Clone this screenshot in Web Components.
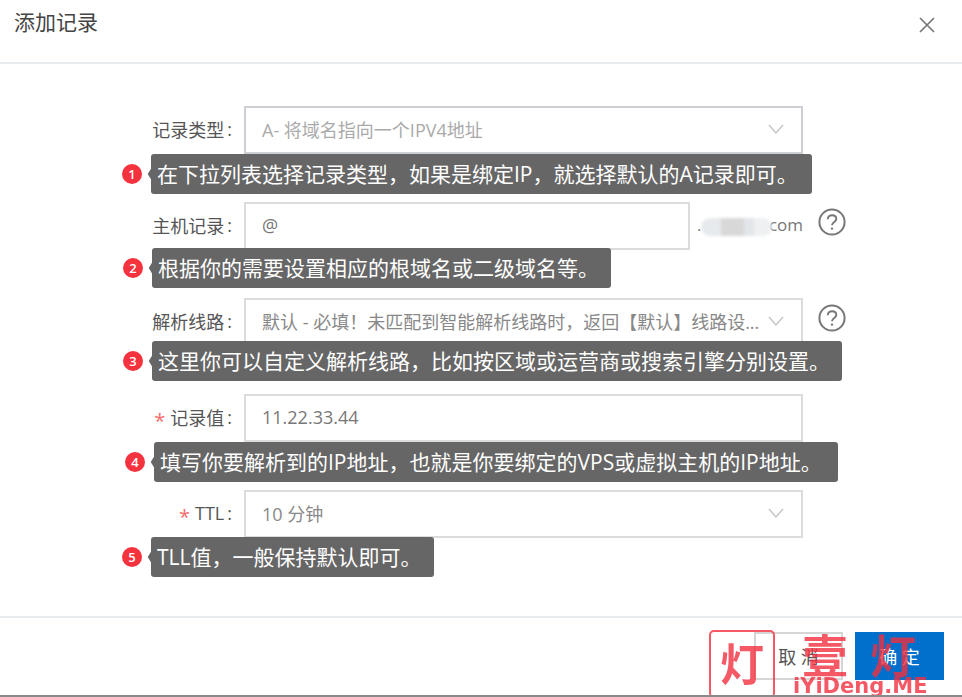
<!DOCTYPE html>
<html lang="zh">
<head>
<meta charset="utf-8">
<title>添加记录</title>
<style>
    html, body { margin: 0; background: #fff; }
    body {
        font-family: 'Open Sans', 'Noto Sans CJK SC', sans-serif;
        overflow: hidden;
    }
</style>
</head>
<body>
<record-dialog heading="添加记录">
    <form-row label="记录类型">
        <select-box dim value="A- 将域名指向一个IPV4地址"></select-box>
    </form-row>
    <form-row label="主机记录" help>
        <text-box value="@" width="446"></text-box>
        <domain-suffix></domain-suffix>
    </form-row>
    <form-row label="解析线路" help>
        <select-box value="默认 - 必填！未匹配到智能解析线路时，返回【默认】线路设..."></select-box>
    </form-row>
    <form-row label="记录值" required>
        <text-box value="11.22.33.44"></text-box>
    </form-row>
    <form-row label="TTL" required>
        <select-box value="10 分钟"></select-box>
    </form-row>

    <note-tip slot="notes" num="1" left="122" top="154" width="661">在下拉列表选择记录类型，如果是绑定IP，就选择默认的A记录即可。</note-tip>
    <note-tip slot="notes" num="2" left="123" top="248" width="459">根据你的需要设置相应的根域名或二级域名等。</note-tip>
    <note-tip slot="notes" num="3" left="123" top="341" width="690">这里你可以自定义解析线路，比如按区域或运营商或搜索引擎分别设置。</note-tip>
    <note-tip slot="notes" num="4" left="125" top="442" width="684">填写你要解析到的IP地址，也就是你要绑定的VPS或虚拟主机的IP地址。</note-tip>
    <note-tip slot="notes" num="5" left="122" top="537" width="283">TLL值，一般保持默认即可。</note-tip>
    <site-mark slot="notes"></site-mark>
</record-dialog>

<script>
const fontStack = `'Open Sans', 'Noto Sans CJK SC', sans-serif`;

class RecordDialog extends HTMLElement {
    constructor() {
        super();
        this.attachShadow({ mode: 'open' });
        this.shadowRoot.innerHTML = `
            <style>
                :host {
                    display: flex;
                    flex-direction: column;
                    position: relative;
                    width: 962px;
                    height: 697px;
                    box-sizing: border-box;
                    border-bottom: 2px solid #8a8a8a;
                    font-family: ${fontStack};
                    overflow: hidden;
                }
                header {
                    height: 64px;
                    box-sizing: border-box;
                    flex: none;
                    border-bottom: 2px solid #e8ecef;
                    display: flex;
                    justify-content: space-between;
                    padding: 0 26px 0 14px;
                }
                h2 {
                    margin: 7px 0 0;
                    font-size: 21px;
                    line-height: 30px;
                    font-weight: 400;
                    color: #444;
                }
                svg { margin-top: 16px; }
                main {
                    flex: 1;
                    display: flex;
                    flex-direction: column;
                    gap: 48px;
                    padding-top: 42px;
                }
                footer {
                    flex: none;
                    height: 79px;
                    box-sizing: border-box;
                    border-top: 2px solid #e8ecef;
                    display: flex;
                    justify-content: flex-end;
                    gap: 12px;
                    padding: 14px 18px 0 0;
                }
                button {
                    width: 89px;
                    height: 48px;
                    font: inherit;
                    font-size: 18px;
                    border-radius: 0;
                    box-sizing: border-box;
                }
                .cancel { background: #fff; border: 2px solid #d5d5d5; color: #555; }
                .ok { background: #0070cc; border: 0; color: #fff; }
            </style>
            <header>
                <h2>${this.getAttribute('heading')}</h2>
                <svg width="18" height="18" viewBox="0 0 18 18" fill="none" stroke="#777" stroke-width="1.7"><path d="M2 2 16 16M16 2 2 16"/></svg>
            </header>
            <main><slot></slot></main>
            <footer>
                <button class="cancel">取 消</button>
                <button class="ok">确 定</button>
            </footer>
            <slot name="notes"></slot>
        `;
    }
}

class FormRow extends HTMLElement {
    constructor() {
        super();
        this.attachShadow({ mode: 'open' });
        const star = this.hasAttribute('required') ? '<i>*</i>' : '';
        const help = this.hasAttribute('help') ? `
            <svg class="help" width="28" height="28" viewBox="0 0 28 28" fill="none" stroke="#777" stroke-width="2">
                <circle cx="14" cy="14" r="12.6"/>
                <path d="M9.8 11.2c0-2.4 1.8-4 4.3-4s4.2 1.5 4.2 3.7c0 3-4.3 3.2-4.3 6.4" stroke-width="1.9"/>
                <circle cx="14" cy="20.6" r="1.2" fill="#777" stroke="none"/>
            </svg>` : '';
        this.shadowRoot.innerHTML = `
            <style>
                :host {
                    display: flex;
                    align-items: center;
                    height: 48px;
                    font-size: 18px;
                    position: relative;
                }
                label {
                    flex: none;
                    width: 232px;
                    padding-right: 12px;
                    display: flex;
                    justify-content: flex-end;
                    align-items: center;
                    color: #555;
                    white-space: nowrap;
                    margin-top: -3px;
                }
                i { font-style: normal; color: #f56c6c; margin-right: 5px; font-size: 20px; line-height: 18px; padding-top: 8px; }
                b { font-weight: 400; margin-left: 3px; }
                .field { display: flex; width: 559px; flex: none; align-items: center; }
                .help { margin-left: 15px; margin-top: -8px; }
            </style>
            <label>${star}${this.getAttribute('label')}<b>:</b></label>
            <div class="field"><slot></slot></div>
            ${help}
        `;
    }
}

class TextBox extends HTMLElement {
    constructor() {
        super();
        this.attachShadow({ mode: 'open' });
        const w = this.getAttribute('width');
        this.shadowRoot.innerHTML = `
            <style>
                :host {
                    display: flex;
                    align-items: center;
                    box-sizing: border-box;
                    height: 48px;
                    ${w ? `width: ${w}px; flex: none;` : 'flex: 1;'}
                    border: 2px solid #dcdcdc;
                    padding: 0 0 2px 16px;
                    color: #777;
                    font-size: 18px;
                }
            </style>
            ${this.getAttribute('value')}
        `;
    }
}

class SelectBox extends HTMLElement {
    constructor() {
        super();
        this.attachShadow({ mode: 'open' });
        const dim = this.hasAttribute('dim');
        this.shadowRoot.innerHTML = `
            <style>
                :host {
                    display: flex;
                    align-items: center;
                    justify-content: space-between;
                    box-sizing: border-box;
                    height: 48px;
                    flex: 1;
                    border: 2px solid ${dim ? '#ccd0d4' : '#dcdcdc'};
                    padding: 0 17px 2px 16px;
                    color: ${dim ? '#aaa' : '#888'};
                    font-size: 18px;
                    white-space: nowrap;
                }
            </style>
            <span>${this.getAttribute('value')}</span>
            <svg width="16" height="10" viewBox="0 0 16 10" fill="none" stroke="#c4c8cc" stroke-width="1.5"><path d="M1 1 8 9 15 1"/></svg>
        `;
    }
}

class DomainSuffix extends HTMLElement {
    constructor() {
        super();
        this.attachShadow({ mode: 'open' });
        this.shadowRoot.innerHTML = `
            <style>
                :host {
                    display: flex;
                    position: relative;
                    flex: 1;
                    margin-left: 7px;
                    justify-content: space-between;
                    color: #777;
                    font-size: 17px;
                    margin-top: -4px;
                }
                .smudge {
                    position: absolute;
                    left: 4px;
                    top: 5px;
                    width: 71px;
                    height: 18px;
                    border-radius: 9px;
                    background: linear-gradient(90deg, #e6eaed 0 28%, #d8d8d8 28% 60%, #e2e6ea 60% 75%, #eef0f1 75%);
                    filter: blur(1.5px);
                }
            </style>
            <span>.</span><span>com</span>
            <div class="smudge"></div>
        `;
    }
}

class NoteTip extends HTMLElement {
    constructor() {
        super();
        this.attachShadow({ mode: 'open' });
        const left = this.getAttribute('left');
        const top = this.getAttribute('top');
        const width = this.getAttribute('width');
        this.shadowRoot.innerHTML = `
            <style>
                :host {
                    position: absolute;
                    left: ${left}px;
                    top: ${top}px;
                    display: flex;
                    align-items: center;
                    height: 40px;
                    font-family: ${fontStack};
                }
                .num {
                    width: 20px;
                    height: 20px;
                    margin-right: 9px;
                    border-radius: 50%;
                    background: #f5333f;
                    color: #fff;
                    font-size: 13px;
                    font-weight: 600;
                    line-height: 20px;
                    text-align: center;
                }
                .box {
                    position: relative;
                    box-sizing: border-box;
                    width: ${width}px;
                    height: 40px;
                    padding-left: 6px;
                    background: #666;
                    border-radius: 3px;
                    color: #fff;
                    font-size: 21px;
                    line-height: 40px;
                    white-space: nowrap;
                }
                .box::before {
                    content: '';
                    position: absolute;
                    left: -4px;
                    top: 15px;
                    width: 10px;
                    height: 10px;
                    background: #666;
                    transform: scaleX(.6) rotate(45deg);
                }
                .txt { position: relative; }
            </style>
            <div class="num">${this.getAttribute('num')}</div>
            <div class="box"><span class="txt"><slot></slot></span></div>
        `;
    }
}

class SiteMark extends HTMLElement {
    constructor() {
        super();
        this.attachShadow({ mode: 'open' });
        this.shadowRoot.innerHTML = `
            <style>
                :host {
                    position: absolute;
                    left: 709px;
                    top: 630px;
                    width: 220px;
                    height: 67px;
                    color: #f2303f;
                    font-family: 'Noto Sans CJK SC', sans-serif;
                    font-weight: 700;
                    opacity: .8;
                    pointer-events: none;
                }
                .logo {
                    position: absolute;
                    left: 0;
                    top: 0;
                    width: 66px;
                    height: 68px;
                    box-sizing: border-box;
                    border: 2px solid #f2303f;
                    border-radius: 5px;
                    font-size: 44px;
                    line-height: 60px;
                    text-align: center;
                }
                .cn {
                    position: absolute;
                    top: -7px;
                    font-size: 46px;
                    line-height: 60px;
                }
                .url {
                    position: absolute;
                    left: 84px;
                    top: 43px;
                    font-family: 'DejaVu Sans', sans-serif;
                    font-size: 21px;
                    line-height: 26px;
                    white-space: nowrap;
                }
            </style>
            <div class="logo">灯</div>
            <div class="cn" style="left:93px">壹</div>
            <div class="cn" style="left:161px">灯</div>
            <div class="url">iYiDeng.ME</div>
        `;
    }
}

customElements.define('record-dialog', RecordDialog);
customElements.define('form-row', FormRow);
customElements.define('text-box', TextBox);
customElements.define('select-box', SelectBox);
customElements.define('domain-suffix', DomainSuffix);
customElements.define('note-tip', NoteTip);
customElements.define('site-mark', SiteMark);
</script>
</body>
</html>
